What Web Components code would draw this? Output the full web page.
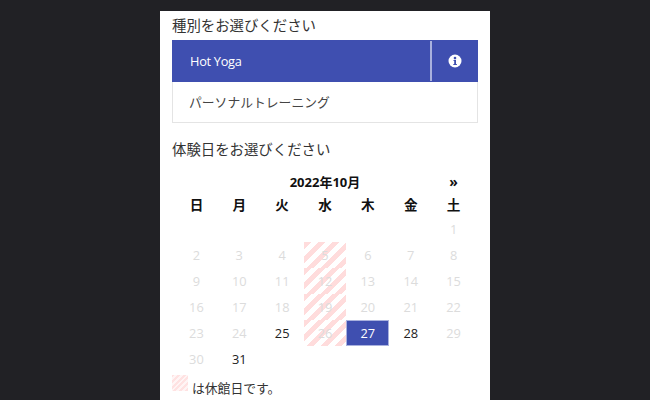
<!DOCTYPE html>
<html lang="ja">
<head>
<meta charset="utf-8">
<title>体験予約</title>
<style>
html, body { margin: 0; height: 100%; overflow: hidden; background: #212125; }
body { font-family: "Open Sans", "Noto Sans CJK JP", sans-serif; }
</style>
</head>
<body>
<booking-panel>
  <section-title>種別をお選びください</section-title>
  <type-list>
    <type-item selected info>Hot Yoga</type-item>
    <type-item>パーソナルトレーニング</type-item>
  </type-list>
  <section-title class="second">体験日をお選びください</section-title>
  <month-calendar></month-calendar>
  <closed-note>は休館日です。</closed-note>
</booking-panel>

<script>
const FONT = '"Open Sans", "Noto Sans CJK JP", sans-serif';
const STRIPES = 'repeating-linear-gradient(135deg, #ffdcdc 0 5px, #fff 5px 10px)';

class BookingPanel extends HTMLElement {
    connectedCallback() {
        this.attachShadow({ mode: 'open' });
        this.shadowRoot.innerHTML = `
            <style>
                :host {
                    display: block;
                    box-sizing: border-box;
                    width: 330px;
                    height: 389px;
                    margin: 11px 0 0 160px;
                    padding: 4px 12px 0;
                    background: #fff;
                    overflow: hidden;
                    font-family: ${FONT};
                }
            </style>
            <slot></slot>
        `;
    }
}

class SectionTitle extends HTMLElement {
    connectedCallback() {
        this.attachShadow({ mode: 'open' });
        this.shadowRoot.innerHTML = `
            <style>
                :host {
                    display: block;
                    height: 25px;
                    line-height: 22px;
                    font-size: 14.4px;
                    color: #333;
                }
                :host(.second) { margin-top: 16px; }
            </style>
            <slot></slot>
        `;
    }
}

class TypeList extends HTMLElement {
    connectedCallback() {
        this.attachShadow({ mode: 'open' });
        this.shadowRoot.innerHTML = `
            <style>
                :host {
                    display: block;
                    width: 306px;
                    box-sizing: border-box;
                    border: 1px solid #e4e4e4;
                    border-top: 0;
                }
            </style>
            <slot></slot>
        `;
    }
}

class TypeItem extends HTMLElement {
    connectedCallback() {
        const info = this.hasAttribute('info') ? `
            <span class="info">
                <svg width="14" height="14" viewBox="0 0 14 14">
                    <circle cx="7" cy="7" r="6.5" fill="#fff"/>
                    <circle cx="7" cy="4.1" r="1.3" fill="#3f4fb0"/>
                    <path d="M5.5 6h2.5v3.9h.9v1.1H5.3V9.9h.9V7.1h-.7z" fill="#3f4fb0"/>
                </svg>
            </span>` : '';
        this.attachShadow({ mode: 'open' });
        this.shadowRoot.innerHTML = `
            <style>
                :host {
                    display: flex;
                    height: 40px;
                    color: #444;
                    font-size: 12.8px;
                }
                :host([selected]) {
                    height: 42px;
                    margin: 0 -1px;
                    background: #3f4fb0;
                    color: #fff;
                    letter-spacing: -0.3px;
                }
                .label {
                    flex: 1;
                    display: flex;
                    align-items: center;
                    padding: 0 0 1px 16px;
                }
                :host([selected]) .label { padding: 0 0 1px 18px; }
                .info {
                    width: 46px;
                    display: flex;
                    align-items: center;
                    justify-content: center;
                    border-left: 2px solid #a9b1de;
                    margin: 1px 0;
                }
            </style>
            <span class="label"><slot></slot></span>
            ${info}
        `;
    }
}

class MonthCalendar extends HTMLElement {
    connectedCallback() {
        const names = ['日', '月', '火', '水', '木', '金', '土'];
        const closed = [5, 12, 19, 26];
        let cells = names.map(n => `<div class="cell head">${n}</div>`).join('');
        // 2022年10月 starts on a Saturday
        for (let i = 0; i < 6; i++) cells += '<div class="cell"></div>';
        for (let d = 1; d <= 31; d++) {
            let cls = 'cell';
            if (d === 27) cls += ' selected';
            else if (d === 25 || d === 28 || d === 31) cls += ' open';
            else cls += ' off';
            if (closed.includes(d)) cls += ' closed';
            cells += `<div class="${cls}">${d}</div>`;
        }
        this.attachShadow({ mode: 'open' });
        this.shadowRoot.innerHTML = `
            <style>
                :host {
                    display: block;
                    width: 300px;
                    margin: 8px 0 0 3px;
                    font-size: 12.8px;
                    color: #222;
                }
                .caption {
                    display: grid;
                    grid-template-columns: repeat(7, 1fr);
                    height: 20px;
                    line-height: 20px;
                    font-weight: 700;
                    font-size: 13px;
                    color: #111;
                    text-align: center;
                }
                .month { grid-column: 2 / 7; }
                .next { font-size: 14px; }
                .grid {
                    display: grid;
                    grid-template-columns: repeat(7, 1fr);
                    grid-template-rows: 24px;
                    grid-auto-rows: 26px;
                }
                .cell {
                    display: flex;
                    align-items: center;
                    justify-content: center;
                    box-sizing: border-box;
                }
                .head { font-weight: 700; font-size: 13.6px; color: #111; }
                .off { color: #dcdcdc; }
                .closed { background: ${STRIPES}; }
                .selected {
                    background: #3f4fb0;
                    color: #fff;
                    border: 1px solid #a9b1de;
                }
            </style>
            <div class="caption"><span></span><span class="month">2022年10月</span><span class="next">»</span></div>
            <div class="grid">${cells}</div>
        `;
    }
}

class ClosedNote extends HTMLElement {
    connectedCallback() {
        this.attachShadow({ mode: 'open' });
        this.shadowRoot.innerHTML = `
            <style>
                :host {
                    display: flex;
                    align-items: flex-start;
                    gap: 4px;
                    margin-top: 3px;
                    font-size: 12.8px;
                    color: #333;
                }
                .swatch {
                    width: 16px;
                    height: 16px;
                    background: repeating-linear-gradient(135deg, #ffe2e2 0 2px, #fff5f5 2px 4px);
                }
                .text { line-height: 18px; padding-top: 4px; }
            </style>
            <span class="swatch"></span>
            <span class="text"><slot></slot></span>
        `;
    }
}

customElements.define('booking-panel', BookingPanel);
customElements.define('section-title', SectionTitle);
customElements.define('type-list', TypeList);
customElements.define('type-item', TypeItem);
customElements.define('month-calendar', MonthCalendar);
customElements.define('closed-note', ClosedNote);
</script>
</body>
</html>
